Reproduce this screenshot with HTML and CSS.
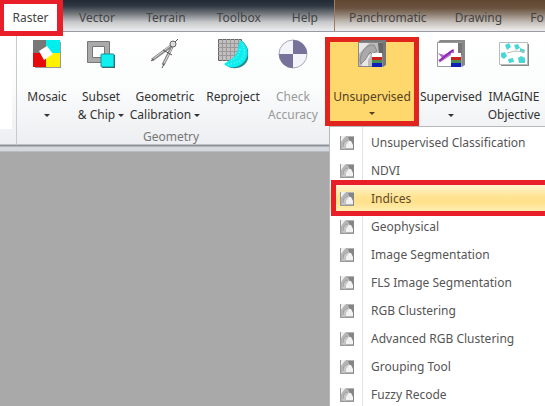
FILE: index.html
```html
<!DOCTYPE html>
<html lang="en">
<head>
<meta charset="utf-8">
<title>Raster</title>
<link rel="stylesheet" href="styles.css">
</head>
<body>
<svg class="defs" aria-hidden="true">
  <symbol id="thumb" viewBox="0 0 14 14">
    <path fill="#b4b4b4" d="M0 0h14v14H0z"/>
    <path fill="#f0f0f0" d="M1 0h5L4 2 1 6z"/>
    <path fill="#c8c8c8" d="M2 12c0-5 3-9 6-9l2 2-4 4-1 4z"/>
    <path fill="none" stroke="#999" d="M.500 0v13.500h13.500M3 11c0-4 2-7 5-7"/>
    <path fill="#858585" d="M8 1h6v12h-1L12 7 9 4z"/>
    <path fill="#f2f2f2" d="M6 12V9l3-4h2l2 4v3z"/>
  </symbol>
  <symbol id="bands" viewBox="0 0 10 14">
    <path fill="#fff" d="M0 0h10v5H0z"/>
    <path fill="#c9251d" d="M0 4h10v4H0z"/>
    <path fill="#4b8c56" d="M0 7h10v3H0z"/>
    <path fill="#0d20b8" d="M0 10h10v4H0z"/>
  </symbol>
</svg>
<nav class="tabs">
  <button class="tab active">Raster</button>
  <button class="tab">Vector</button>
  <button class="tab">Terrain</button>
  <button class="tab">Toolbox</button>
  <button class="tab">Help</button>
  <div class="context">
    <button class="tab">Panchromatic</button>
    <button class="tab">Drawing</button>
    <button class="tab last">Fo</button>
  </div>
</nav>
<main class="ribbon">
  <section class="edge"><div class="panel"></div></section>
  <section class="group">
    <div class="tools geometry">
      <button class="tool">
        <svg class="icon" viewBox="0 0 28 28"><path fill="#555" d="M2 2h26v26H2z" opacity=".6"/><path fill="#777" d="M0 0h14v14H0z"/><path fill="#00eeee" d="M13 0h14v14H13z"/><path fill="#e60b0b" d="M0 13h14v14H0z"/><path fill="#fff200" d="M13 13h14v14H13z"/><path fill="#fff" d="m6 11 8-5 6 8-9 6z"/></svg>
        <span>Mosaic</span><span class="arrow"></span>
      </button>
      <button class="tool">
        <svg class="icon" viewBox="0 0 28 28"><path fill="#aaa" stroke="#777" fill-rule="evenodd" d="M.5 1.500h22v21H.5zM5.500 6.500v11h12v-11z"/><path fill="#555" d="M16 15h12v13H15z"/><rect x="14" y="14" width="13" height="13" rx="1" fill="#10f0f0" stroke="#168f98"/></svg>
        <span>Subset</span><span>&amp; Chip<i class="arrow"></i></span>
      </button>
      <button class="tool">
        <svg class="icon" viewBox="0 0 28 30"><g fill="none" stroke="#888"><path stroke-width="3" d="M20 7 1 21M21 8 12 26"/><path stroke="#ddd" d="M19 7 2 20M21 9 13 24"/><path stroke="#555" d="M12 11l9 5M24 3l3-3M0 22l3-2M11 29l2-4"/><circle cx="22" cy="5" r="3" fill="#ddd" stroke="#666"/></g></svg>
        <span>Geometric</span><span>Calibration<i class="arrow"></i></span>
      </button>
      <button class="tool">
        <svg class="icon wide" viewBox="0 0 30 30"><path fill="#c3bfc0" stroke="#666" d="M.5.500h23v21H.5z"/><path fill="none" stroke="#999" d="M4.500 0v22M8.500 0v22M12.500 0v22M16.500 0v22M20.500 0v22M0 4.500h24M0 8.500h24M0 12.500h24M0 16.500h24"/><path fill="#278c91" d="M24 2c8 6 9 18 2 24-6 5-15 4-19-1l10-5 4-7z"/><path fill="#0eeeee" d="m22 1-3 12-3 5-10 7c5 5 14 4 19-1 7-7 6-17-3-23z"/><path stroke="#a5ffff" stroke-dasharray="1 2" fill="none" d="M24 5c4 7 3 15-5 18l-9 3M22 10c0 5-3 9-9 12"/></svg>
        <span>Reproject</span>
      </button>
      <button class="tool" disabled>
        <svg class="icon wide" viewBox="0 0 30 30"><circle cx="15" cy="15" r="14" fill="#f4f3fa" stroke="#a9a8b8"/><path fill="#76729a" d="M15 1a14 14 0 0 1 14 14H15zM15 29A14 14 0 0 1 1 15h14z"/></svg>
        <span>Check</span><span>Accuracy</span>
      </button>
    </div>
    <div class="caption">Geometry</div>
  </section>
  <section class="group rest">
    <div class="tools classify">
      <div class="dropdown">
        <button class="tool open" aria-haspopup="menu" aria-expanded="true">
          <svg class="icon" viewBox="0 0 28 28"><path fill="#777" d="M3 0h25v25l-3 2V3H0z"/><path fill="#bbb" stroke="#888" d="M.5 2.500h24v24H.5z"/><path fill="#e8e8e8" d="M1 3h10L1 14zM4 26c0-8 4-13 9-11l-3 5v6z"/><path fill="#aaa" stroke="#888" d="M2 20C3 12 8 4 16 5l3 6-5 3-2-2-5 8-4 4z"/><path fill="#666" d="M20 3h5v11h-4z"/><use href="#bands" x="14" y="13" width="10" height="14"/></svg>
          <span>Unsupervised</span><span class="arrow"></span>
        </button>
        <div class="menu" role="menu">
          <button class="item" role="menuitem"><svg><use href="#thumb"/></svg><span>Unsupervised Classification</span></button>
          <button class="item" role="menuitem"><svg><use href="#thumb"/></svg><span>NDVI</span></button>
          <button class="item marked" role="menuitem"><svg><use href="#thumb"/></svg><span>Indices</span></button>
          <button class="item" role="menuitem"><svg><use href="#thumb"/></svg><span>Geophysical</span></button>
          <button class="item" role="menuitem"><svg><use href="#thumb"/></svg><span>Image Segmentation</span></button>
          <button class="item" role="menuitem"><svg><use href="#thumb"/></svg><span>FLS Image Segmentation</span></button>
          <button class="item" role="menuitem"><svg><use href="#thumb"/></svg><span>RGB Clustering</span></button>
          <button class="item" role="menuitem"><svg><use href="#thumb"/></svg><span>Advanced RGB Clustering</span></button>
          <button class="item" role="menuitem"><svg><use href="#thumb"/></svg><span>Grouping Tool</span></button>
          <button class="item" role="menuitem"><svg><use href="#thumb"/></svg><span>Fuzzy Recode</span></button>
        </div>
      </div>
      <button class="tool">
        <svg class="icon" viewBox="0 0 28 28"><path fill="#888" d="M3 0h25v25l-3 2V3H0z"/><path fill="#fff" stroke="#999" d="M.5 2.500h24v24H.5z"/><path fill="#777" d="M21 3h4v12h-4z"/><path fill="#b46acb" d="m1 13 6 2 10-6v4L8 19l-6 4 3-5z"/><path stroke="#8e27b1" stroke-width="2" d="M2 21 16 10"/><use href="#bands" x="14" y="13" width="10" height="14"/></svg>
        <span>Supervised</span><span class="arrow"></span>
      </button>
      <button class="tool">
        <svg class="icon wide" viewBox="0 0 30 28"><path fill="#888" d="M2 4h28v22H2z"/><path fill="#fff" stroke="#bbb" d="M.5 2.500h28v22H.5z"/><path fill="#48d6d6" d="m6 5 4-2 2 4-4 3zM15 5l4-1 2 4-4 2zM2 13l4-1 2 4-3 3-3-2zM9 19l5-1 1 4-5 1zM19 18l3-2 4 2v5h-6zM21 8l5 2-1 3-4-1z"/><path stroke="#bbb" fill="none" d="m8 13 8-2 10 1"/></svg>
        <span>IMAGINE</span><span>Objective</span>
      </button>
    </div>
  </section>
</main>
</body>
</html>
```
FILE: styles.css
```css
* { box-sizing: border-box; }

body {
  margin: 0;
  min-height: 100vh;
  overflow: hidden;
  background: #a9a9a9;
  font: 12px/18px "Noto Sans", sans-serif;
  color: #333;
}

button {
  margin: 0;
  padding: 0;
  border: 0;
  background: none;
  font: inherit;
  color: inherit;
  white-space: nowrap;
}

.defs { position: absolute; width: 0; height: 0; }

.tabs {
  display: flex;
  gap: 1px;
  height: 32px;
  border-bottom: 1px solid #989ca2;
  background: linear-gradient(#222b35 0, #303842 6px, #777b80 14px, #c5c7c9 22px, #eceeef 31px);
}

.tab {
  flex: none;
  height: 31px;
  padding: 4px 15px 0;
  color: #444;
}

.tab.active {
  position: relative;
  z-index: 1;
  width: 63px;
  height: 36px;
  padding: 0;
  border: solid #e81f29;
  border-width: 4px 6px 5px 4px;
  background: #fff;
}

.context {
  display: flex;
  flex: 1;
  min-width: 0;
  border-left: 1px solid #a37b57;
  background: linear-gradient(#604731 0, #69523e 8px, #8c7c6f 14px, #c3bdb7 22px, #f0efef 31px);
}

.context .tab { padding: 4px 14px 0; }

.context .last { padding-right: 0; }

.ribbon {
  display: flex;
  height: 120px;
  padding-bottom: 6px;
  border-bottom: 1px solid #b9bcc0;
  background: linear-gradient(#fff 0, #fbfcfc 55px, #eceef1 112px, #8d9298 113px, #8d9298 114px, #d5d9de 115px);
}

.edge {
  flex: none;
  width: 17px;
  border-right: 1px solid #c7cace;
}

.panel { width: 12px; height: 97px; background: #fff; }

.group { flex: none; }

.rest { flex: 1; min-width: 0; }

.tools { display: grid; height: 96px; }

.geometry { grid-template-columns: 60px 48px 80px 56px 64px; }

.classify { grid-template-columns: 94px 64px 1fr; }

.tool {
  display: flex;
  flex-direction: column;
  align-items: center;
  width: 100%;
  padding-top: 7px;
}

.tool > span { display: flex; align-items: center; height: 18px; }

.tool:disabled { color: #999; }

.icon {
  flex: none;
  width: 28px;
  height: 30px;
  margin-bottom: 19px;
}

.icon.wide { width: 30px; }

.arrow::after {
  content: "";
  margin-left: 3px;
  border: 3px solid transparent;
  border-top-color: currentColor;
  border-bottom: 0;
}

i.arrow { display: flex; }

span.arrow::after { margin-left: 0; }

.caption { text-align: center; color: #777; }

.dropdown { position: relative; }

.tool.open {
  height: 89px;
  margin-top: 5px;
  padding-top: 0;
  border: 5px solid #e2241f;
  background: #fed86c;
  color: #554021;
}

.tool.open .icon { margin-top: -3px; }

.menu {
  position: absolute;
  z-index: 2;
  top: 94px;
  left: 4px;
  width: calc(100vw - 329px);
  padding: 2px 0;
  border: solid #b6b8bc;
  border-width: 1px 0 1px 1px;
  background: linear-gradient(90deg, #fff 32px, #e2e3e5 32px, #e2e3e5 33px, #fff 33px);
  color: #555;
}

.item {
  position: relative;
  display: flex;
  align-items: center;
  gap: 17px;
  width: 100%;
  height: 28px;
  padding-left: 10px;
}

.item svg { width: 14px; height: 14px; }

.marked {
  background: linear-gradient(#fff4d0, #ffe494 40%, #ffe18a 60%, #fff0b9);
  color: #5b4a2d;
}

.marked::after {
  content: "";
  position: absolute;
  inset: -5px 0 -3px 1px;
  border: solid #e81f29;
  border-width: 5px 0 5px 5px;
}
```
